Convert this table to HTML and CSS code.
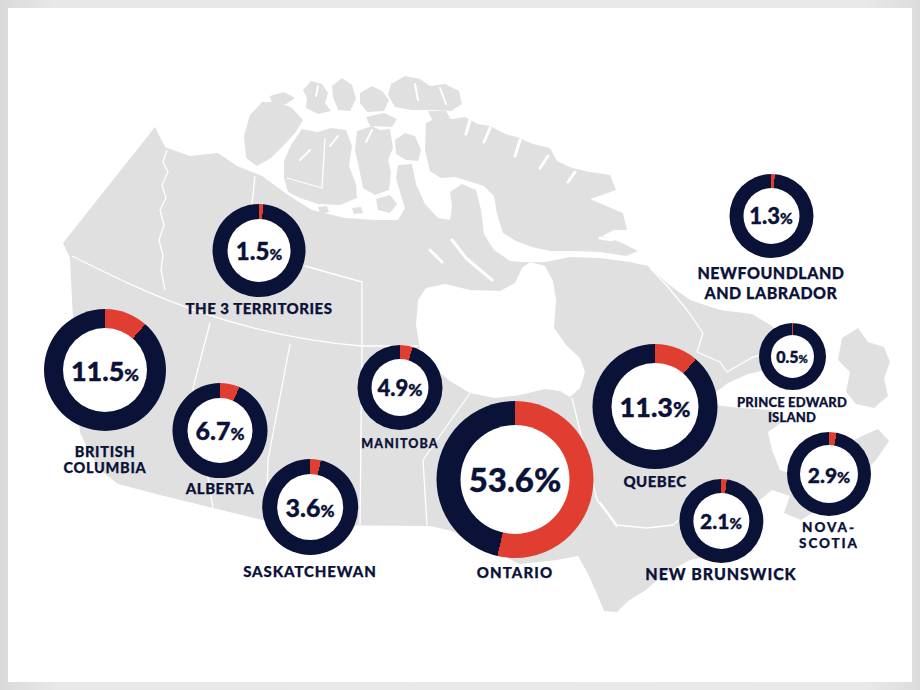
FILE: index.html
```html
<!DOCTYPE html>
<html lang="en">
<head>
<meta charset="utf-8">
<title>Canada – share by province</title>
<link rel="stylesheet" href="styles.css">
</head>
<body>
<div class="frame">
  <div class="canvas">
    <svg class="map" viewBox="8 8 904 674" width="904" height="674" aria-hidden="true">
      <g class="land">
        <!-- mainland -->
        <path d="M155,127 L165,147 L190,156 L218,153 L237,166 L262,176 L288,195 L312,210 L345,218 L375,220 L398,220 L405,208 L400,192 L396,178 L398,165 L412,164 L416,184 L425,204 L438,218 L450,220 L452,206 L450,192 L462,184 L476,190 L481,210 L484,234 L494,250 L510,261 L522,262 L545,262 L570,257 L600,258 L630,262 L648,266 L668,284 L690,300 L720,310 L752,314 L772,326 L787,345 L790,360 L775,368 L748,374 L728,383 L712,395 L714,405 L740,408 L772,410 L782,422 L768,432 L772,450 L780,470 L792,474 L812,461 L836,449 L860,437 L878,429 L889,441 L876,460 L851,485 L826,505 L801,520 L784,513 L790,496 L772,490 L756,503 L742,538 L720,554 L690,560 L664,574 L646,590 L628,601 L617,612 L604,611 L597,594 L588,574 L578,556 L557,560 L520,564 L482,546 L452,531 L430,526 L290,525 L262,520 L213,508 L160,495 L118,484 L100,470 L88,450 L80,432 L76,400 L75,350 L72,300 L70,258 L63,243 Z"/>
        <!-- Banks -->
        <path d="M246,158 L244,136 L250,115 L262,102 L279,102 L292,108 L303,120 L295,133 L283,146 L271,158 L257,166 Z"/>
        <!-- Victoria -->
        <path d="M302,129 L318,132 L331,128 L346,130 L352,146 L349,166 L356,184 L357,198 L340,205 L318,204 L300,198 L288,192 L284,178 L284,161 L291,145 Z"/>
        <!-- Prince of Wales -->
        <path d="M357,131 L372,126 L380,130 L390,129 L393,148 L388,160 L391,172 L389,190 L375,195 L363,188 L359,168 L355,150 Z"/>
        <!-- Somerset -->
        <path d="M395,140 L405,133 L415,136 L421,150 L418,161 L406,160 L396,154 Z"/>
        <!-- King William & small islands -->
        <path d="M376,199 L390,195 L397,204 L390,213 L378,210 Z"/>
        <path d="M318,207 L327,206 L329,212 L320,214 Z"/>
        <path d="M352,208 L361,207 L363,213 L354,214 Z"/>
        <path d="M440,228 L448,226 L450,234 L442,236 Z"/>
        <!-- Baffin (with Devon / Brodeur) -->
        <path d="M426,123 L440,116 L452,119 L465,117 L478,124 L490,126 L505,134 L517,137 L533,144 L550,148 L557,161 L572,168 L590,172 L610,175 L616,190 L602,195 L590,199 L604,205 L623,213 L627,230 L614,230 L602,236 L620,242 L638,251 L626,256 L600,252 L575,251 L550,251 L532,247 L516,241 L503,233 L497,214 L494,196 L484,186 L468,181 L455,177 L441,178 L430,171 L425,150 Z"/>
        <!-- Queen Elizabeth islands -->
        <path d="M303,90 L311,81 L322,84 L328,93 L325,103 L331,111 L318,114 L306,108 L307,98 Z"/>
        <path d="M332,86 L342,78 L352,85 L356,99 L350,111 L338,110 L333,97 Z"/>
        <path d="M360,93 L372,86 L382,91 L389,100 L384,111 L367,112 L360,103 Z"/>
        <path d="M391,84 L405,76 L420,79 L430,86 L445,84 L459,91 L462,104 L451,111 L430,110 L412,110 L395,107 L388,95 Z"/>
        <path d="M366,117 L384,113 L397,119 L392,127 L370,126 Z"/>
        <path d="M428,111 L446,111 L450,118 L432,120 Z"/>
        <path d="M270,96 L284,92 L295,98 L286,104 L272,104 Z"/>
        <!-- Newfoundland -->
        <path d="M842,338 L858,328 L868,342 L884,347 L890,362 L884,378 L888,396 L874,408 L856,404 L846,392 L850,372 L838,360 Z"/>
      </g>
      <g class="water">
        <path d="M418,300 L426,288 L445,284 L470,290 L500,291 L515,283 L522,268 L530,262 L545,266 L553,281 L556,300 L554,328 L566,345 L580,358 L585,372 L580,388 L570,397 L560,391 L545,389 L520,395 L495,398 L470,393 L450,381 L432,366 L420,350 L416,325 Z"/>
      </g>
      <g class="channels">
        <path class="w3" d="M452,240 L466,258 L492,280 M430,250 L442,262 M520,140 L515,156 M548,156 L540,168 M600,238 L612,240 M470,120 L466,134 M490,128 L484,142 M575,172 L568,182"/>
        <path class="w2" d="M300,100 L303,110 M415,84 L418,100 M440,88 L446,104 M318,86 L316,96 M372,130 L366,142 M338,136 L330,146 M310,150 L300,160"/>
      </g>
      <g class="borders">
        <path d="M167,150 L163,162 L168,172 L162,185 L166,198 L160,210 L164,225 L159,240 L163,255 L161,270 L165,290"/>
        <path d="M72,256 C140,290 230,335 362,346 L418,346"/>
        <path d="M255,176 L252,204 L258,214 M305,266 L362,282 L362,346 M325,138 L322,188 L287,178"/>
        <path d="M210,323 L193,388 L205,460 L213,508"/>
        <path d="M290,344 L268,460 L266,522"/>
        <path d="M362,346 L360,525"/>
        <path d="M470,393 L423,460 L427,525"/>
        <path d="M572,398 L597,500 L617,527"/>
        <path d="M600,502 L617,525 L647,528 L673,525 L690,510"/>
        <path d="M650,268 L668,287 L687,310 L703,333 L697,352 L720,362 L727,372 L753,357 L787,348"/>
      </g>
    </svg>

    <div class="pin pin-terr">
      <div class="donut" style="--p:1.5%"><div class="hole"><span class="num">1.5<span class="pct">%</span></span></div></div>
      <div class="label">THE 3 TERRITORIES</div>
    </div>

    <div class="pin pin-bc">
      <div class="donut" style="--p:11.5%"><div class="hole"><span class="num">11.5<span class="pct">%</span></span></div></div>
      <div class="label">BRITISH<br>COLUMBIA</div>
    </div>

    <div class="pin pin-ab">
      <div class="donut" style="--p:6.7%"><div class="hole"><span class="num">6.7<span class="pct">%</span></span></div></div>
      <div class="label">ALBERTA</div>
    </div>

    <div class="pin pin-sk">
      <div class="donut" style="--p:3.6%"><div class="hole"><span class="num">3.6<span class="pct">%</span></span></div></div>
      <div class="label">SASKATCHEWAN</div>
    </div>

    <div class="pin pin-mb">
      <div class="donut" style="--p:4.9%"><div class="hole"><span class="num">4.9<span class="pct">%</span></span></div></div>
      <div class="label">MANITOBA</div>
    </div>

    <div class="pin pin-on">
      <div class="donut" style="--p:53.6%"><div class="hole"><span class="num">53.6<span class="pct">%</span></span></div></div>
      <div class="label">ONTARIO</div>
    </div>

    <div class="pin pin-qc">
      <div class="donut" style="--p:11.3%"><div class="hole"><span class="num">11.3<span class="pct">%</span></span></div></div>
      <div class="label">QUEBEC</div>
    </div>

    <div class="pin pin-nb">
      <div class="donut" style="--p:2.1%"><div class="hole"><span class="num">2.1<span class="pct">%</span></span></div></div>
      <div class="label">NEW BRUNSWICK</div>
    </div>

    <div class="pin pin-ns">
      <div class="donut" style="--p:2.9%"><div class="hole"><span class="num">2.9<span class="pct">%</span></span></div></div>
      <div class="label">NOVA-<br>SCOTIA</div>
    </div>

    <div class="pin pin-pei">
      <div class="donut" style="--p:0.5%"><div class="hole"><span class="num">0.5<span class="pct">%</span></span></div></div>
      <div class="label">PRINCE EDWARD<br>ISLAND</div>
    </div>

    <div class="pin pin-nl">
      <div class="donut" style="--p:1.3%"><div class="hole"><span class="num">1.3<span class="pct">%</span></span></div></div>
      <div class="label">NEWFOUNDLAND<br>AND LABRADOR</div>
    </div>
  </div>
</div>
</body>
</html>
```

FILE: styles.css
```css
* { box-sizing: border-box; }

html, body {
  margin: 0;
  padding: 0;
  background: #ffffff;
}

body {
  font-family: "Lato", "Open Sans", "Liberation Sans", sans-serif;
  color: #0b1238;
}

.frame {
  width: 920px;
  height: 690px;
  padding: 8px;
  background: linear-gradient(90deg, #d9d9d9 0%, #e8e8e8 6%, #e9e9e9 94%, #dcdcdc 100%);
}

.canvas {
  position: relative;
  width: 904px;
  height: 674px;
  background: #ffffff;
  overflow: hidden;
}

.map {
  position: absolute;
  left: 0;
  top: 0;
  display: block;
}

.land path { fill: #e0e0e0; }
.water path { fill: #ffffff; }

.channels path {
  fill: none;
  stroke: #ffffff;
  stroke-linecap: round;
  stroke-linejoin: round;
}
.channels .w2 { stroke-width: 2; }
.channels .w3 { stroke-width: 3; }

.borders path {
  fill: none;
  stroke: #ffffff;
  stroke-width: 1.3;
  stroke-linejoin: round;
}

/* ---------- donut pins ---------- */

.pin {
  position: absolute;
  display: flex;
  flex-direction: column;
  align-items: center;
  transform: translateX(-50%);
  --d: 84px;
  --t: 14px;
  --fs: 21px;
  --pct: 0.7em;
  --lfs: 15px;
  --lh: 15px;
  --gap: 5px;
  --ls: 0.6px;
}

.donut {
  width: var(--d);
  height: var(--d);
  border-radius: 50%;
  background: conic-gradient(#e03e31 0 var(--p), #0b1238 var(--p) 100%);
  display: flex;
  align-items: center;
  justify-content: center;
  flex: none;
}

.hole {
  width: calc(var(--d) - 2 * var(--t));
  height: calc(var(--d) - 2 * var(--t));
  border-radius: 50%;
  background: #ffffff;
  display: flex;
  align-items: center;
  justify-content: center;
}

.num {
  font-size: var(--fs);
  font-weight: 900;
  line-height: 1;
  letter-spacing: 0;
  white-space: nowrap;
  -webkit-text-stroke: 0.35px #0b1238;
}

.pct {
  font-size: var(--pct);
}

.label {
  margin-top: var(--gap);
  font-size: var(--lfs);
  line-height: var(--lh);
  font-weight: 900;
  letter-spacing: var(--ls);
  text-align: center;
  white-space: nowrap;
  -webkit-text-stroke: 0.25px #0b1238;
}

.pin-terr { left: 251px; top: 196px; --d: 93px; --t: 15px; --fs: 24px; --pct: 0.64em; --lfs: 15px; --gap: 4px; --ls: 0.5px; }
.pin-bc   { left: 97px;  top: 301px; --d: 122px; --t: 19px; --fs: 27px; --pct: 0.66em; --lfs: 14.5px; --lh: 15.5px; --gap: 13px; --ls: 0.7px; }
.pin-ab   { left: 212px; top: 375px; --d: 95px; --t: 15px; --fs: 25px; --pct: 0.68em; --lfs: 15px; --gap: 3px; --ls: 0.5px; }
.pin-sk   { left: 302px; top: 451px; --d: 96px; --t: 15px; --fs: 25px; --pct: 0.68em; --lfs: 15px; --gap: 9px; --ls: 0.9px; }
.pin-mb   { left: 392px; top: 337px; --d: 85px; --t: 14px; --fs: 22px; --pct: 0.78em; --lfs: 12.5px; --gap: 6px; --ls: 1.1px; }
.pin-on   { left: 507px; top: 393px; --d: 157px; --t: 24px; --fs: 33px; --pct: 1em; --lfs: 15px; --gap: 7px; --ls: 1.1px; }
.pin-qc   { left: 647px; top: 336px; --d: 125px; --t: 19px; --fs: 27px; --pct: 0.78em; --lfs: 15px; --gap: 5px; --ls: 0.5px; }
.pin-nb   { left: 713px; top: 471px; --d: 84px; --t: 14px; --fs: 21px; --pct: 0.72em; --lfs: 16px; --gap: 3px; --ls: 0.9px; }
.pin-ns   { left: 821px; top: 424px; --d: 84px; --t: 13px; --fs: 21px; --pct: 0.76em; --lfs: 13.5px; --lh: 15.5px; --gap: 4px; --ls: 1.9px; }
.pin-pei  { left: 784px; top: 315px; --d: 67px; --t: 12px; --fs: 16px; --pct: 0.7em; --lfs: 13px; --lh: 15px; --gap: 5px; --ls: 0.2px; }
.pin-nl   { left: 763px; top: 166px; --d: 84px; --t: 14px; --fs: 22px; --pct: 0.7em; --lfs: 16px; --lh: 20px; --gap: 5px; --ls: 0.5px; }
```
